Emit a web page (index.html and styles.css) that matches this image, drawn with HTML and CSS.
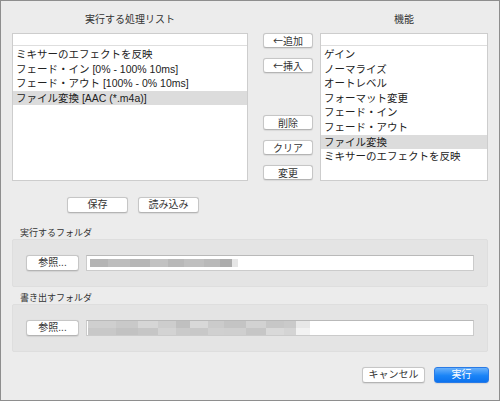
FILE: index.html
```html
<!DOCTYPE html>
<html lang="ja">
<head>
<meta charset="utf-8">
<link rel="stylesheet" href="styles.css">
</head>
<body>
<div class="window">
  <div class="lists">
    <div class="col col-left">
      <div class="col-title">実行する処理リスト</div>
      <div class="listbox">
        <div class="list-head"></div>
        <div class="row">ミキサーのエフェクトを反映</div>
        <div class="row">フェード・イン [0% - 100% 10ms]</div>
        <div class="row">フェード・アウト [100% - 0% 10ms]</div>
        <div class="row selected">ファイル変換 [AAC (*.m4a)]</div>
      </div>
    </div>
    <div class="btn-col">
      <button class="btn side b-add">←追加</button>
      <button class="btn side b-ins">←挿入</button>
      <button class="btn side b-del">削除</button>
      <button class="btn side b-clr">クリア</button>
      <button class="btn side b-chg">変更</button>
    </div>
    <div class="col col-right">
      <div class="col-title">機能</div>
      <div class="listbox">
        <div class="list-head"></div>
        <div class="row">ゲイン</div>
        <div class="row">ノーマライズ</div>
        <div class="row">オートレベル</div>
        <div class="row">フォーマット変更</div>
        <div class="row">フェード・イン</div>
        <div class="row">フェード・アウト</div>
        <div class="row selected">ファイル変換</div>
        <div class="row">ミキサーのエフェクトを反映</div>
      </div>
    </div>
  </div>

  <div class="save-row">
    <button class="btn wide">保存</button>
    <button class="btn wide">読み込み</button>
  </div>

  <div class="group-label first">実行するフォルダ</div>
  <div class="group">
    <button class="btn browse">参照...</button>
    <div class="field">
      <div class="blur blur1">
        <span class="px" style="width:18px;background:#b4b4b4"></span>
        <span class="px" style="width:22px;background:#bdbdbd"></span>
        <span class="px" style="width:20px;background:#b6b6b6"></span>
        <span class="px" style="width:18px;background:#c2c2c2"></span>
        <span class="px" style="width:16px;background:#b8b8b8"></span>
        <span class="px" style="width:20px;background:#bfbfbf"></span>
        <span class="px" style="width:16px;background:#b9b9b9"></span>
        <span class="px" style="width:12px;background:#acacac"></span>
        <span class="px" style="width:6px;background:#e6e6e6"></span>
      </div>
    </div>
  </div>

  <div class="group-label second">書き出すフォルダ</div>
  <div class="group">
    <button class="btn browse">参照...</button>
    <div class="field">
      <div class="blur blur2">
        <span class="px2" style="width:28px;background:linear-gradient(#cfcfcf 50%,#c8c8c8 50%)"></span>
        <span class="px2" style="width:22px;background:linear-gradient(#c9c9c9 50%,#c2c2c2 50%)"></span>
        <span class="px2" style="width:20px;background:linear-gradient(#d6d6d6 50%,#c6c6c6 50%)"></span>
        <span class="px2" style="width:18px;background:linear-gradient(#cdcdcd 50%,#d3d3d3 50%)"></span>
        <span class="px2" style="width:14px;background:linear-gradient(#c0c0c0 50%,#cacaca 50%)"></span>
        <span class="px2" style="width:18px;background:linear-gradient(#d8d8d8 50%,#c8c8c8 50%)"></span>
        <span class="px2" style="width:16px;background:linear-gradient(#cbcbcb 50%,#d0d0d0 50%)"></span>
        <span class="px2" style="width:22px;background:linear-gradient(#c4c4c4 50%,#cfcfcf 50%)"></span>
        <span class="px2" style="width:20px;background:linear-gradient(#d2d2d2 50%,#c6c6c6 50%)"></span>
        <span class="px2" style="width:18px;background:linear-gradient(#c7c7c7 50%,#d9d9d9 50%)"></span>
        <span class="px2" style="width:12px;background:linear-gradient(#cacaca 50%,#d4d4d4 50%)"></span>
        <span class="px2" style="width:14px;background:linear-gradient(#e8e8e8 50%,#f2f2f2 50%)"></span>
      </div>
    </div>
  </div>

  <div class="footer">
    <button class="btn cancel">キャンセル</button>
    <button class="btn primary">実行</button>
  </div>
</div>
</body>
</html>
```

FILE: styles.css
```css
html, body {
  margin: 0;
  padding: 0;
  background: #ececec;
}

body {
  font-family: "Liberation Sans", "Noto Sans CJK JP", sans-serif;
  color: #222;
}

.window {
  width: 500px;
  height: 401px;
  box-sizing: border-box;
  border: 1px solid #8e8e8e;
  background: #ececec;
  padding: 0 11px;
}

.lists {
  display: flex;
  align-items: flex-start;
}

.col {
  display: flex;
  flex-direction: column;
}

.col-left { width: 236px; }
.col-right { width: 168px; margin-left: 7px; }

.col-title {
  height: 32px;
  box-sizing: border-box;
  padding-top: 12px;
  line-height: 14px;
  font-size: 10px;
  text-align: center;
  color: #333;
}

.listbox {
  height: 148px;
  box-sizing: border-box;
  background: #fff;
  border: 1px solid #cdcdcd;
  overflow: hidden;
}

.list-head {
  height: 11px;
  border-bottom: 1px solid #dedede;
  margin-bottom: 1px;
}

.row {
  height: 14.6px;
  line-height: 14.6px;
  font-size: 10.5px;
  padding-left: 3px;
  white-space: nowrap;
  color: #222;
}

.row.selected {
  background: #dcdcdc;
}

.btn {
  font-family: "Liberation Sans", "Noto Sans CJK JP", sans-serif;
  font-size: 10px;
  color: #333;
  background: #fff;
  border: 1px solid #c6c6c6;
  border-bottom-color: #b4b4b4;
  border-radius: 3px;
  box-shadow: 0 0.5px 1px rgba(0,0,0,0.08);
  padding: 0;
  margin: 0;
  height: 16px;
  line-height: 14px;
  box-sizing: border-box;
  text-align: center;
}

.btn-col {
  width: 50px;
  margin-left: 15px;
  padding-top: 32px;
  display: flex;
  flex-direction: column;
}

.btn.side {
  font-family: "Noto Sans CJK JP", sans-serif;
  width: 50px;
  height: 15px;
  line-height: 13px;
}

.b-ins { margin-top: 10px; }
.b-del { margin-top: 42px; }
.b-clr { margin-top: 10px; }
.b-chg { margin-top: 10px; }

.save-row {
  display: flex;
  gap: 10px;
  margin-top: 16px;
  padding-left: 55px;
}

.btn.wide {
  width: 61px;
}

.group-label {
  height: 12px;
  line-height: 12px;
  font-size: 9px;
  color: #333;
  padding-left: 8px;
}

.group-label.first { margin-top: 14px; }
.group-label.second { margin-top: 5px; }

.group {
  height: 48px;
  box-sizing: border-box;
  background: #e4e4e4;
  border: 1px solid #dedede;
  border-radius: 2px;
  display: flex;
  align-items: center;
  padding: 0 13px;
  gap: 7px;
}

.btn.browse {
  width: 53px;
  flex: none;
}

.field {
  flex: 1;
  height: 16px;
  box-sizing: border-box;
  background: #fff;
  border: 1px solid #cbcbcb;
  border-top-color: #b9b9b9;
  display: flex;
  align-items: center;
  padding-left: 3px;
}

.blur {
  display: flex;
}

.px {
  display: block;
  height: 8px;
}

.px2 {
  display: block;
  height: 14px;
}

.blur2 {
  margin-left: -2px;
}

.footer {
  display: flex;
  justify-content: flex-end;
  gap: 9px;
  margin-top: 15px;
  margin-right: -1px;
}

.btn.cancel {
  width: 63px;
}

.btn.primary {
  width: 55px;
  color: #fff;
  border: 1px solid #2a7be6;
  background: linear-gradient(#6ab1fb, #1a84f7 55%, #0c72ee);
}
```
